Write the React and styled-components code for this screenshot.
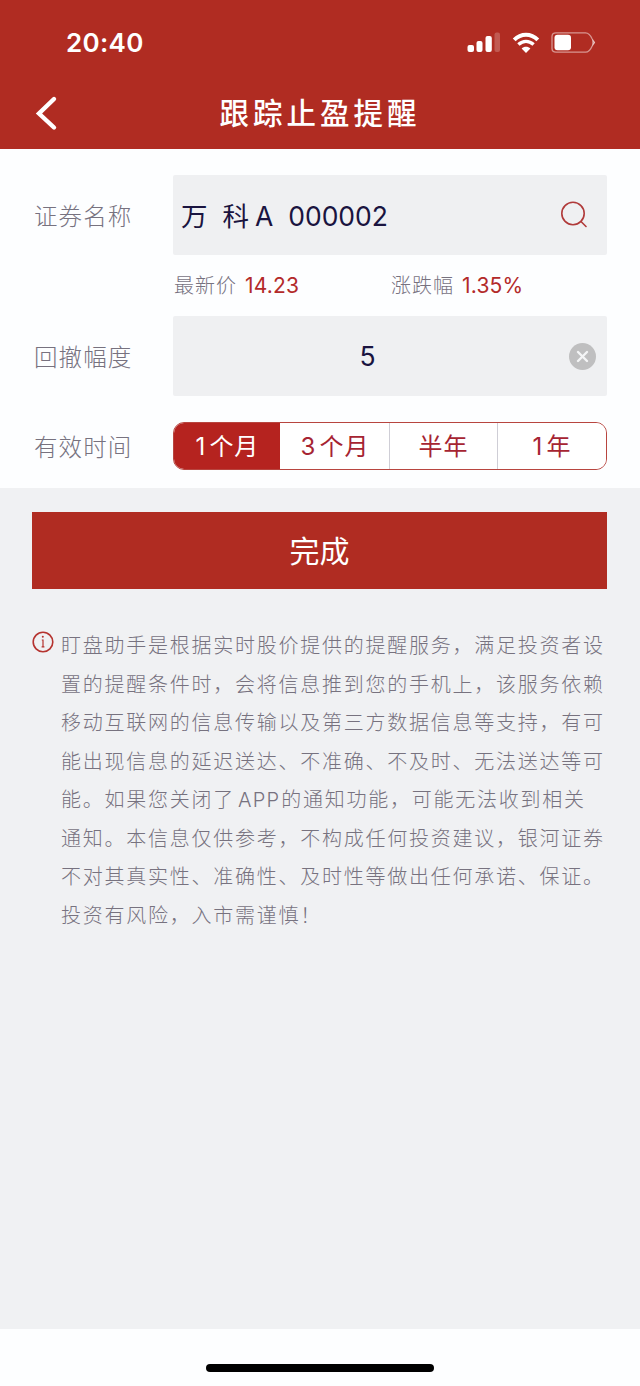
import React, { useState } from 'react';
import styled, { createGlobalStyle } from 'styled-components';

const GlobalStyle = createGlobalStyle`
  * {
    box-sizing: border-box;
  }

  body {
    margin: 0;
    background: #fdfeff;
    font-family: Inter, 'Noto Sans CJK SC', sans-serif;
  }

  button {
    margin: 0;
    padding: 0;
    border: 0;
    background: none;
    font-family: inherit;
  }
`;

const Screen = styled.div`
  display: flex;
  flex-direction: column;
  width: 640px;
  height: 1386px;
  overflow: hidden;
`;

const Header = styled.header`
  height: 149px;
  background: #b02c22;
  color: #fff;
`;

const StatusBar = styled.div`
  display: flex;
  align-items: center;
  justify-content: space-between;
  height: 76px;
  padding: 9px 43px 0 66px;
`;

const Time = styled.span`
  font-size: 26px;
  font-weight: 600;
  line-height: 32px;
  letter-spacing: 0.3px;
`;

const StatusIcons = styled.div`
  display: flex;
  align-items: center;
  gap: 11px;

  svg {
    display: block;
  }
`;

const NavBar = styled.div`
  display: grid;
  grid-template-columns: 80px 1fr 80px;
  align-items: center;
  height: 73px;
`;

const BackButton = styled.button`
  display: flex;
  padding-left: 34px;
`;

const Title = styled.h1`
  margin: 0;
  padding-top: 1px;
  font-size: 29.5px;
  font-weight: 500;
  line-height: 40px;
  letter-spacing: 4px;
  text-align: center;
`;

const Form = styled.section`
  height: 339px;
  padding: 26px 33px 0 34px;
`;

const Row = styled.div`
  display: grid;
  grid-template-columns: 139px 434px;
  align-items: center;
`;

const PeriodRow = styled(Row)`
  margin-top: 26px;
`;

const Label = styled.span`
  padding-top: 4px;
  font-size: 23.5px;
  font-weight: 300;
  line-height: 32px;
  letter-spacing: 1.1px;
  color: #77727f;
`;

const Field = styled.div`
  display: flex;
  align-items: center;
  height: 80px;
  padding: 0 ${(p) => p.$right}px 0 8px;
  border-radius: 2px;
  background: #eff0f2;
  color: #1a1440;
`;

const Value = styled.span`
  flex: 1;
  padding-top: 2px;
  font-size: 26.5px;
  line-height: 36px;
  white-space: pre;
`;

const CenteredValue = styled(Value)`
  padding: 0 15px 0 0;
  text-align: center;
`;

const Market = styled.span`
  margin-left: 6px;
`;

const Code = styled.span`
  margin-left: 15px;
`;

const Quotes = styled.div`
  display: grid;
  grid-template-columns: 217px 1fr;
  height: 61px;
  padding: 1px 0 0 140px;
  align-items: center;
`;

const Quote = styled.span`
  font-size: 20px;
  font-weight: 300;
  line-height: 28px;
  letter-spacing: 1px;
  color: #77727f;
`;

const Price = styled.span`
  margin-left: 8px;
  font-size: 21px;
  font-weight: 400;
  letter-spacing: 0.2px;
  color: #b32a2a;
`;

const Segments = styled.div`
  display: grid;
  grid-template-columns: 106px 109px 108px 1fr;
  height: 48px;
  border: 1.5px solid #b8453f;
  border-radius: 11px;
  overflow: hidden;
`;

const Segment = styled.button`
  padding-top: 2px;
  border-left: 1px solid ${(p) => (p.$divider ? '#cfced6' : 'transparent')};
  background: ${(p) => (p.$active ? '#b5231f' : '#fff')};
  background-clip: border-box;
  color: ${(p) => (p.$active ? '#fff' : '#a62432')};
  font-size: 24px;
  line-height: 44px;
  letter-spacing: 1px;
`;

const Count = styled.span`
  margin-right: 3px;
`;

const Body = styled.main`
  height: 841px;
  padding: 24px 33px 0 32px;
  background: #f0f1f3;
`;

const SubmitButton = styled.button`
  display: block;
  width: 575px;
  height: 77px;
  padding-top: 2px;
  background: #b02c22;
  color: #fff;
  font-size: 30px;
  line-height: 75px;
`;

const Notice = styled.div`
  display: flex;
  gap: 7px;
  margin-top: 38px;
`;

const NoticeIcon = styled.svg`
  flex: none;
  display: block;
  margin-top: 4px;
`;

const NoticeText = styled.p`
  margin: 0;
  font-size: 20px;
  font-weight: 300;
  line-height: 38.5px;
  letter-spacing: 1.75px;
  color: #77727f;
  white-space: nowrap;
`;

const Line = styled.span`
  display: block;
`;

const AppName = styled.span`
  margin: 0 1px 0 3px;
  letter-spacing: 1.2px;
`;

const Footer = styled.footer`
  display: flex;
  justify-content: center;
  height: 57px;
  padding-top: 35px;
`;

const HomeIndicator = styled.div`
  width: 228px;
  height: 8px;
  border-radius: 4px;
  background: #000;
`;

const periods = [
  { count: '1', unit: '个月' },
  { count: '3', unit: '个月' },
  { unit: '半年' },
  { count: '1', unit: '年' },
];

const noticeLines = [
  '盯盘助手是根据实时股价提供的提醒服务，满足投资者设',
  '置的提醒条件时，会将信息推到您的手机上，该服务依赖',
  '移动互联网的信息传输以及第三方数据信息等支持，有可',
  '能出现信息的延迟送达、不准确、不及时、无法送达等可',
  <>能。如果您关闭了<AppName>APP</AppName>的通知功能，可能无法收到相关</>,
  '通知。本信息仅供参考，不构成任何投资建议，银河证券',
  '不对其真实性、准确性、及时性等做出任何承诺、保证。',
  '投资有风险，入市需谨慎！',
];

const SignalIcon = () => (
  <svg width="34" height="22" viewBox="0 0 34 22" fill="#fff">
    <rect x="0.5" y="13" width="6.5" height="7" rx="2" />
    <rect x="9.5" y="9" width="6" height="11" rx="2" />
    <rect x="18.5" y="4" width="6.3" height="16" rx="2" />
    <rect x="27.5" y="0.5" width="5.5" height="19.5" rx="2" opacity="0.22" />
  </svg>
);

const WifiIcon = () => (
  <svg width="28" height="22" viewBox="0 0 28 22" fill="none" stroke="#fff">
    <path d="M2.2 7.8C9 1 19 1 25.8 7.8" strokeWidth="4" />
    <path d="M6.4 12.6C11 8.4 17 8.4 21.6 12.6" strokeWidth="3.4" />
    <path d="M14 21L9.6 16.6C12 14.2 16 14.2 18.4 16.6Z" fill="#fff" stroke="none" />
  </svg>
);

const BatteryIcon = () => (
  <svg width="46" height="22" viewBox="0 0 46 22">
    <path
      d="M5 0.8H34.5C38 0.8 39.5 3 41.2 7L43.5 10.5L41.2 14C39.5 18 38 20.2 34.5 20.2H5Q1 20.2 1 16.5V4.5Q1 0.8 5 0.8Z"
      fill="none"
      stroke="#fff"
      strokeOpacity="0.5"
      strokeWidth="1.3"
      strokeLinejoin="round"
    />
    <path d="M41.2 7L44 10.5L41.2 14Z" fill="#fff" opacity="0.5" />
    <rect x="3.5" y="2.8" width="16.5" height="15.4" rx="3" fill="#fff" />
  </svg>
);

const App = () => {
  const [period, setPeriod] = useState(0);

  return (
    <Screen lang="zh-CN">
      <GlobalStyle />
      <Header>
        <StatusBar>
          <Time>20:40</Time>
          <StatusIcons>
            <SignalIcon />
            <WifiIcon />
            <BatteryIcon />
          </StatusIcons>
        </StatusBar>
        <NavBar>
          <BackButton aria-label="返回">
            <svg width="24" height="36" viewBox="0 0 24 36" fill="none">
              <path
                d="M20 4L5 18.5L20 32.5"
                stroke="#fff"
                strokeWidth="4.4"
                strokeLinecap="round"
              />
            </svg>
          </BackButton>
          <Title>跟踪止盈提醒</Title>
        </NavBar>
      </Header>

      <Form>
        <Row>
          <Label>证券名称</Label>
          <Field $right={19}>
            <Value>
              万 &nbsp;科<Market>A</Market><Code>000002</Code>
            </Value>
            <svg width="28" height="28" viewBox="0 0 28 28" fill="none" stroke="#b03a3a" strokeWidth="1.6">
              <circle cx="13" cy="12.5" r="11.2" />
              <path d="M21 20.5L26 25.5" strokeLinecap="round" />
            </svg>
          </Field>
        </Row>
        <Quotes>
          <Quote>
            最新价<Price>14.23</Price>
          </Quote>
          <Quote>
            涨跌幅<Price>1.35%</Price>
          </Quote>
        </Quotes>
        <Row>
          <Label>回撤幅度</Label>
          <Field $right={11}>
            <CenteredValue>5</CenteredValue>
            <svg width="27" height="27" viewBox="0 0 27 27">
              <circle cx="13.5" cy="13.5" r="13.5" fill="#bfbfc0" />
              <path d="M9 9L18 18M18 9L9 18" stroke="#f4f5f6" strokeWidth="2.4" strokeLinecap="round" />
            </svg>
          </Field>
        </Row>
        <PeriodRow>
          <Label>有效时间</Label>
          <Segments>
            {periods.map(({ count, unit }, i) => (
              <Segment key={i} $active={i === period} $divider={i > 1} onClick={() => setPeriod(i)}>
                {count && <Count>{count}</Count>}
                {unit}
              </Segment>
            ))}
          </Segments>
        </PeriodRow>
      </Form>

      <Body>
        <SubmitButton>完成</SubmitButton>
        <Notice>
          <NoticeIcon width="22" height="22" viewBox="0 0 22 22" fill="none" stroke="#b5332f">
            <circle cx="11" cy="11" r="9.8" strokeWidth="1.6" />
            <path d="M9.8 9H11V15.8M9.6 15.8H12.4" strokeWidth="1.2" />
            <circle cx="10.8" cy="5.8" r="1" fill="#b5332f" stroke="none" />
          </NoticeIcon>
          <NoticeText>
            {noticeLines.map((line, i) => (
              <Line key={i}>{line}</Line>
            ))}
          </NoticeText>
        </Notice>
      </Body>

      <Footer>
        <HomeIndicator />
      </Footer>
    </Screen>
  );
};

export default App;
